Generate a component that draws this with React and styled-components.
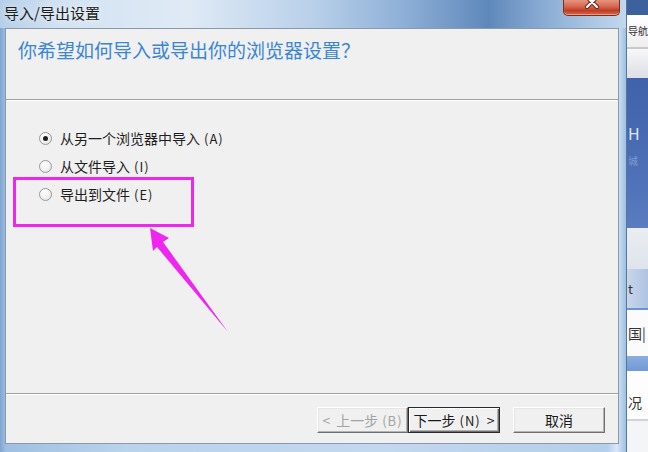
import React from "react";
import styled, { createGlobalStyle } from "styled-components";

const GlobalStyle = createGlobalStyle`
  html, body { margin: 0; padding: 0; background: #eef1f5; }
  body { width: 648px; height: 452px; overflow: hidden; }
`;

const CJK = `"Noto Sans CJK SC", "Noto Sans", sans-serif`;

const Screen = styled.div`
  position: relative;
  width: 648px;
  height: 452px;
  display: flex;
  overflow: hidden;
  font-family: ${CJK};
`;

const Window = styled.div`
  width: 627px;
  flex: none;
  display: flex;
  flex-direction: column;
  box-sizing: border-box;
  border-right: 1px solid #56779d;
  background: linear-gradient(90deg, #7fa6d2 0%, #9fc0e2 1%, #b9d3ec 20%, #c2d8ee 60%, #b4cfeb 97%, #d8e8f7 98.5%, #9fbfe2 100%);
`;

const TitleBar = styled.div`
  height: 28px;
  display: flex;
  align-items: flex-start;
  padding-left: 4px;
  background: linear-gradient(90deg, #b6cfe9 0%, #d3e3f2 10%, #dfeaf5 30%, #b9d0e9 50%, #8caed6 65%, #5f88ba 78%, #86a9d2 86%, #c3d8ee 100%);
`;

const Title = styled.span`
  margin-top: 3px;
  font-size: 15px;
  line-height: 20px;
  color: #1c1c1c;
  text-shadow: 0 0 6px rgba(255, 255, 255, 0.9);
`;

const CloseButton = styled.div`
  margin-left: auto;
  margin-right: 6px;
  width: 57px;
  height: 16px;
  box-sizing: border-box;
  display: flex;
  justify-content: center;
  align-items: flex-start;
  overflow: hidden;
  border: 1px solid #7b2d22;
  border-top: none;
  border-radius: 0 0 5px 5px;
  background: linear-gradient(180deg, #e7957f 0%, #d4664d 45%, #bf3d24 70%, #d26a4a 100%);
  box-shadow: inset 0 -1px 0 rgba(255, 190, 170, 0.6);
`;

const Client = styled.div`
  flex: 1;
  margin: 0 7px 8px 5px;
  display: flex;
  flex-direction: column;
  background: #f0f0f0;
  border: 1px solid #8b98a8;
`;

const Header = styled.div`
  height: 71px;
  box-sizing: border-box;
  padding: 9px 0 0 12px;
  border-bottom: 1px solid #a0a0a0;
  box-shadow: 0 1px 0 #ffffff;
`;

const Heading = styled.div`
  font-size: 19px;
  line-height: 24px;
  color: #3b86d3;
`;

const Content = styled.div`
  flex: 1;
  display: flex;
  flex-direction: column;
  padding: 24px 0 0 33px;
`;

const OptionRow = styled.label`
  height: 28px;
  display: flex;
  align-items: center;
  gap: 8px;
`;

const Radio = styled.span`
  position: relative;
  width: 13px;
  height: 13px;
  box-sizing: border-box;
  border-radius: 50%;
  border: 1px solid #9a9a9a;
  background: radial-gradient(circle at 40% 35%, #ffffff 0%, #f4f4f4 45%, #d8d8d8 100%);
  &::after {
    content: "";
    position: absolute;
    left: 3px;
    top: 3px;
    width: 5px;
    height: 5px;
    border-radius: 50%;
    background: #1e1e1e;
    display: ${(p) => (p.$checked ? "block" : "none")};
  }
`;

const OptionLabel = styled.span`
  font-size: 14px;
  line-height: 18px;
  color: #1e1e1e;
`;

const Accel = styled.span`
  margin-left: 4px;
  font-size: 13px;
  letter-spacing: 1px;
`;

const Footer = styled.div`
  height: 50px;
  box-sizing: border-box;
  display: flex;
  justify-content: flex-end;
  align-items: flex-start;
  padding: 13px 13px 0 0;
  border-top: 1px solid #a0a0a0;
  box-shadow: inset 0 1px 0 #ffffff;
`;

const Button = styled.div`
  width: ${(p) => p.$w}px;
  height: 26px;
  box-sizing: border-box;
  margin-left: ${(p) => p.$gap || 0}px;
  display: flex;
  align-items: center;
  justify-content: center;
  gap: 6px;
  font-size: 14px;
  color: ${(p) => (p.$disabled ? "#a3a3a3" : "#1a1a1a")};
  background: #f0f0f0;
  border: 1px solid;
  border-color: ${(p) => (p.$default ? "#2a2a2a" : "#ffffff #6f6f6f #6f6f6f #ffffff")};
  box-shadow: ${(p) =>
    p.$default
      ? "inset 1px 1px 0 #ffffff, inset -1px -1px 0 #6f6f6f, inset -2px -2px 0 #b0b0b0"
      : "inset -1px -1px 0 #b4b4b4, inset 1px 1px 0 #e6e6e6"};
`;

const Strip = styled.div`
  width: 21px;
  flex: none;
  display: flex;
  flex-direction: column;
  overflow: hidden;
  background: #f3f4f6;
  font-size: 13px;
  color: #333;
`;

const StripBlock = styled.div`
  height: ${(p) => p.$h}px;
  flex: none;
  display: flex;
  flex-direction: column;
  justify-content: ${(p) => p.$justify || "center"};
  padding-left: ${(p) => p.$pad ?? 2}px;
  background: ${(p) => p.$bg};
  color: ${(p) => p.$color || "#333"};
  line-height: 16px;
  white-space: nowrap;
  overflow: hidden;
`;

const StripText = styled.span`
  font-size: ${(p) => p.$size || 13}px;
  margin-top: ${(p) => p.$top || 0}px;
  opacity: ${(p) => p.$fade || 1};
`;

const Overlay = styled.svg`
  position: absolute;
  left: 0;
  top: 0;
  width: 648px;
  height: 452px;
  pointer-events: none;
`;

const Option = ({ checked, label, accel }) => (
  <OptionRow>
    <Radio $checked={checked} />
    <OptionLabel>
      {label}
      <Accel>({accel})</Accel>
    </OptionLabel>
  </OptionRow>
);

export default function App() {
  return (
    <Screen>
      <GlobalStyle />
      <Window>
        <TitleBar>
          <Title>导入/导出设置</Title>
          <CloseButton>
            <svg width="16" height="14" viewBox="0 0 16 14" style={{ marginTop: -5 }}>
              <path d="M3 2 L13 12 M13 2 L3 12" stroke="#6b1d12" strokeWidth="4.2" strokeLinecap="round" />
              <path d="M3 2 L13 12 M13 2 L3 12" stroke="#ffffff" strokeWidth="2.4" strokeLinecap="round" />
            </svg>
          </CloseButton>
        </TitleBar>
        <Client>
          <Header>
            <Heading>你希望如何导入或导出你的浏览器设置？</Heading>
          </Header>
          <Content>
            <Option checked label="从另一个浏览器中导入" accel="A" />
            <Option label="从文件导入" accel="I" />
            <Option label="导出到文件" accel="E" />
          </Content>
          <Footer>
            <Button $w={91} $disabled>
              <span>&lt;</span>
              <span>上一步<Accel>(B)</Accel></span>
            </Button>
            <Button $w={92} $default>
              <span>下一步<Accel>(N)</Accel></span>
              <span>&gt;</span>
            </Button>
            <Button $w={92} $gap={13}>取消</Button>
          </Footer>
        </Client>
      </Window>
      <Strip>
        <StripBlock $h={15} $bg="#3d619c" />
        <StripBlock $h={32} $bg="linear-gradient(180deg,#ffffff,#eeeeee)" $pad={1}>
          <StripText $size={10}>导航</StripText>
        </StripBlock>
        <StripBlock $h={2} $bg="#c6c9ce" />
        <StripBlock $h={29} $bg="linear-gradient(180deg,#f7f7f8,#dcdfe4)" />
        <StripBlock $h={150} $bg="linear-gradient(180deg,#3f62ab,#4c6fb6 60%,#5a7cbf)" $color="#dfe7f5" $justify="flex-start" $pad={1}>
          <StripText $size={16} $top={47}>H</StripText>
          <StripText $size={10} $top={12} $fade={0.35}>城</StripText>
        </StripBlock>
        <StripBlock $h={41} $bg="linear-gradient(180deg,#eaedf1,#dfe4ec)" />
        <StripBlock $h={39} $bg="linear-gradient(90deg,#c9d6ea,#aec3e2)" $pad={1}>
          <StripText>t</StripText>
        </StripBlock>
        <StripBlock $h={2} $bg="#6d93cf" />
        <StripBlock $h={46} $bg="#fbfbfb" $pad={1}>
          <StripText $size={14}>国|</StripText>
        </StripBlock>
        <StripBlock $h={15} $bg="linear-gradient(180deg,#8aaee0,#7199d3)" />
        <StripBlock $h={48} $bg="#fdfdfd" $pad={1}>
          <StripText $size={14} $top={14}>况</StripText>
        </StripBlock>
        <StripBlock $h={2} $bg="#d0d3d8" />
        <StripBlock $h={31} $bg="#f4f5f6" />
      </Strip>
      <Overlay viewBox="0 0 648 452">
        <rect x="14.5" y="178.5" width="178" height="47" fill="none" stroke="#ee26ee" strokeWidth="3" />
        <polygon points="150,228 169,238 163,242 228,332 157,247 153,251" fill="#ee26ee" />
      </Overlay>
    </Screen>
  );
}
